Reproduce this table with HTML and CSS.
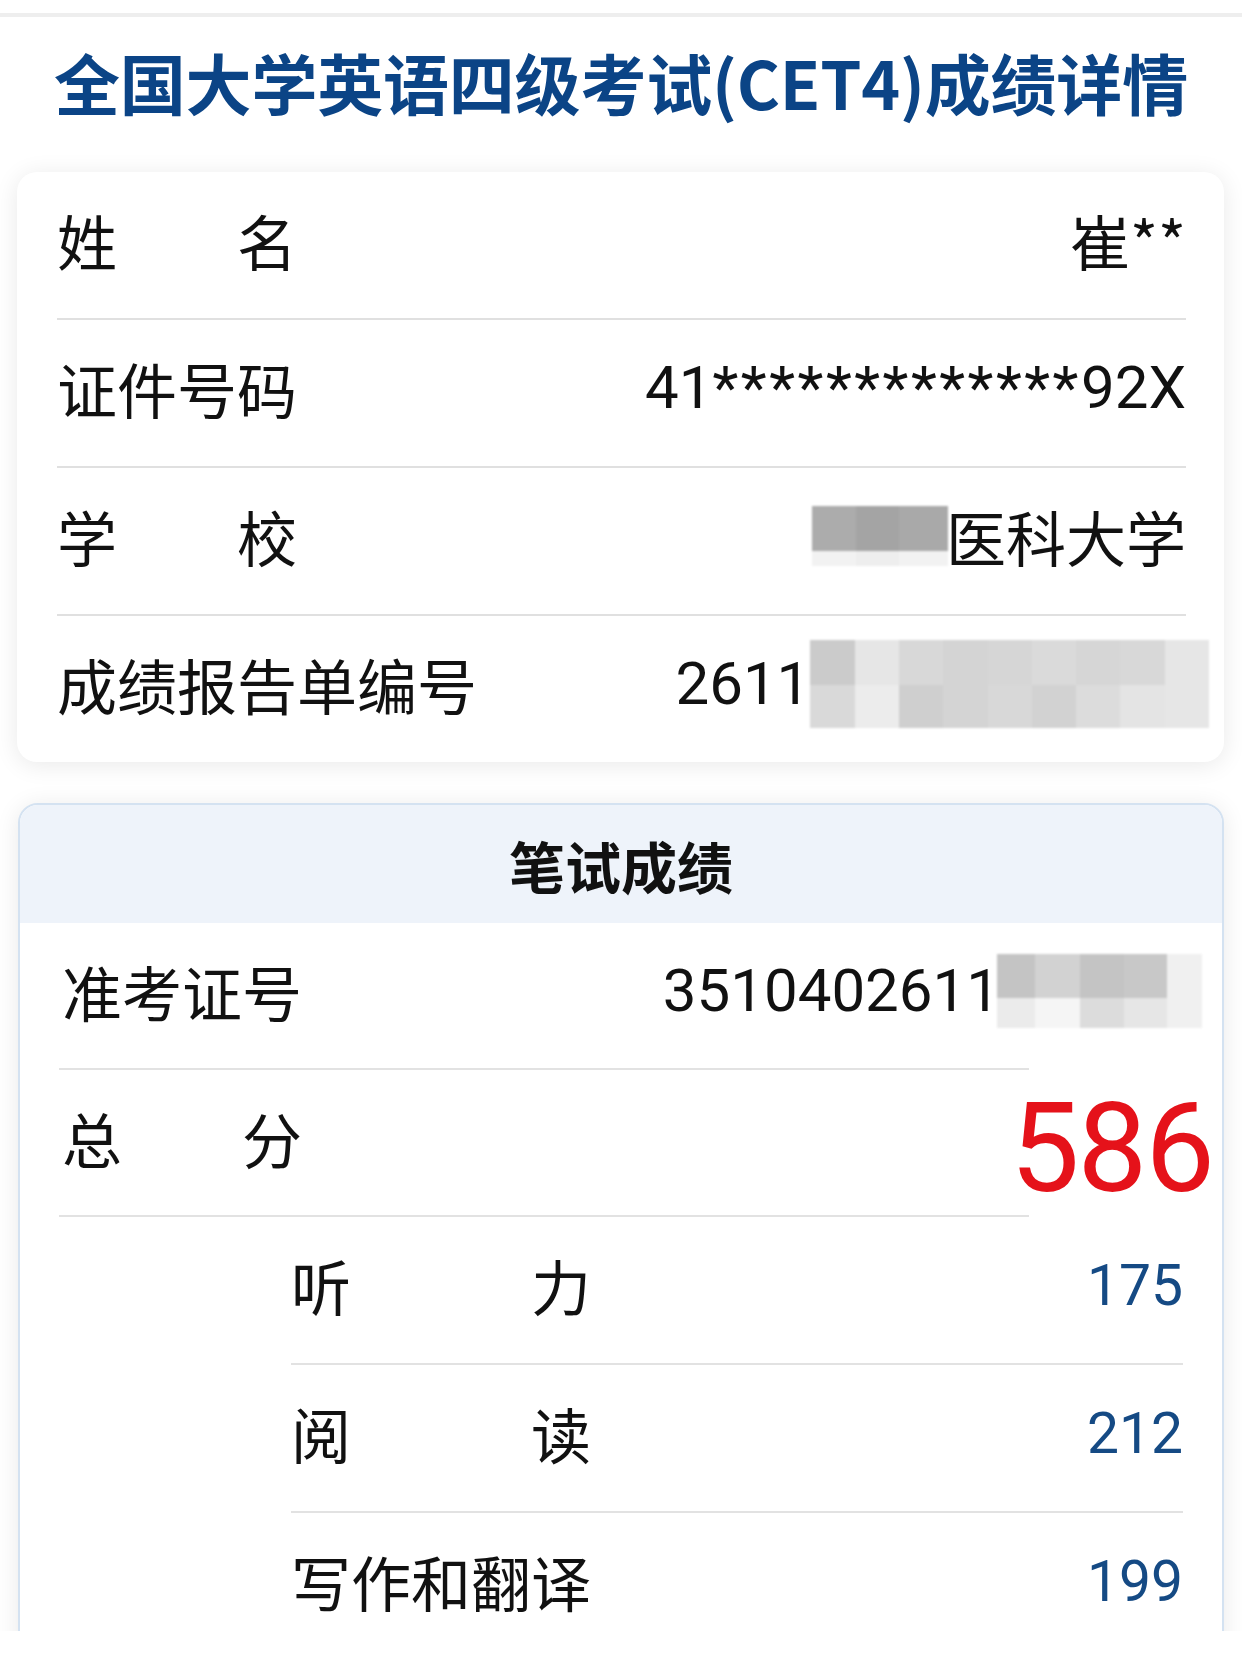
FILE: index.html
```html
<!DOCTYPE html>
<html lang="zh-CN">
<head>
<meta charset="utf-8">
<title>CET4 成绩详情</title>
<link rel="stylesheet" href="styles.css">
</head>
<body>
<div class="screen">
  <div class="topline"></div>
  <h1 class="title">全国大学英语四级考试(CET4)成绩详情</h1>

  <section class="card info">
    <div class="row">
      <span class="label">姓　　名</span>
      <span class="value">崔**</span>
    </div>
    <div class="row">
      <span class="label">证件号码</span>
      <span class="value num">41<span class="stars">*************</span>92X</span>
    </div>
    <div class="row">
      <span class="label">学　　校</span>
      <span class="value with-mosaic">
        <span class="mosaic m-school">
          <i class="g-ac"></i><i class="g-a4"></i><i class="g-a9"></i>
          <i class="g-f2"></i><i class="g-ee"></i><i class="g-f2"></i>
        </span>医科大学</span>
    </div>
    <div class="row">
      <span class="label">成绩报告单编号</span>
      <span class="value num with-mosaic report">2611<span class="mosaic m-report">
          <i class="g-cb"></i><i class="g-e6"></i><i class="g-d8"></i><i class="g-d4"></i><i class="g-d6"></i><i class="g-da"></i><i class="g-d6"></i><i class="g-d8"></i><i class="g-e6"></i>
          <i class="g-d9"></i><i class="g-ec"></i><i class="g-cf"></i><i class="g-d4"></i><i class="g-d8"></i><i class="g-d2"></i><i class="g-dc"></i><i class="g-e4"></i><i class="g-e6"></i>
        </span></span>
    </div>
  </section>

  <section class="card written">
    <div class="card-head">笔试成绩</div>
    <div class="card-body">
      <div class="main-row">
        <span class="label">准考证号</span>
        <span class="value num with-mosaic ticket">3510402611<span class="mosaic m-ticket">
            <i class="g-c4"></i><i class="g-d2"></i><i class="g-c4"></i><i class="g-c8"></i><i class="g-f0"></i>
            <i class="g-eb"></i><i class="g-f5"></i><i class="g-dc"></i><i class="g-e6"></i><i class="g-f0"></i>
          </span></span>
      </div>
      <div class="main-row">
        <span class="label">总　　分</span>
        <span class="value total">586</span>
      </div>
      <div class="sub-row">
        <span class="label">听　　　力</span>
        <span class="value score">175</span>
      </div>
      <div class="sub-row">
        <span class="label">阅　　　读</span>
        <span class="value score">212</span>
      </div>
      <div class="sub-row">
        <span class="label">写作和翻译</span>
        <span class="value score">199</span>
      </div>
    </div>
  </section>
</div>
</body>
</html>
```

FILE: styles.css
```css
html, body {
  margin: 0;
  padding: 0;
  background: #ffffff;
}

body {
  font-family: "Noto Sans CJK SC", "Noto Sans", sans-serif;
  color: #111111;
}

.screen {
  height: 1631px;
  overflow: hidden;
  background: #ffffff;
}

.topline {
  margin-top: 13px;
  height: 4px;
  background: #eeeeee;
}

.title {
  margin: 0 0 51px;
  padding-top: 24px;
  font-size: 66px;
  line-height: 80px;
  font-weight: 700;
  text-align: center;
  color: #0b4486;
  white-space: nowrap;
  letter-spacing: -0.2px;
}

.card {
  background: #ffffff;
  border-radius: 20px;
  box-shadow: 0 3px 24px rgba(0, 0, 0, 0.09);
}

.info {
  margin: 0 18px 0 17px;
  padding: 0 38px 0 40px;
}

.row {
  display: flex;
  align-items: center;
  height: 136px;
  padding-bottom: 10px;
  border-bottom: 2px solid #e0e0e0;
}

.row:last-child {
  border-bottom: none;
}

.label {
  font-size: 60px;
  line-height: 1;
  color: #111111;
  white-space: pre;
}

.value {
  margin-left: auto;
  font-size: 60px;
  line-height: 1;
  color: #111111;
  white-space: nowrap;
}

.num {
  font-family: "Roboto", "Noto Sans", sans-serif;
}

.stars {
  letter-spacing: 2.5px;
}

.with-mosaic {
  display: inline-flex;
  align-items: center;
}

.mosaic {
  display: grid;
  filter: blur(0.8px);
}

.mosaic i {
  display: block;
}

.m-school {
  grid-template-columns: 44px 43px 49px;
  grid-template-rows: 45px 15px;
  margin-right: -2px;
}

.m-report {
  grid-template-columns: repeat(9, 44.3px);
  grid-template-rows: 45px 43px;
}

.report {
  margin-right: -23px;
}

.m-ticket {
  grid-template-columns: 38px 45px 44px 43px 35px;
  grid-template-rows: 44px 30px;
  margin-left: -3px;
}

.ticket {
  margin-right: -19px;
}

.g-a4 { background: #a4a4a4; }
.g-a9 { background: #a9a9a9; }
.g-ac { background: #acacac; }
.g-c4 { background: #c4c4c4; }
.g-c8 { background: #c8c8c8; }
.g-cb { background: #cbcbcb; }
.g-cf { background: #cfcfcf; }
.g-d2 { background: #d2d2d2; }
.g-d4 { background: #d4d4d4; }
.g-d6 { background: #d6d6d6; }
.g-d8 { background: #d8d8d8; }
.g-d9 { background: #d9d9d9; }
.g-da { background: #dadada; }
.g-dc { background: #dcdcdc; }
.g-e4 { background: #e4e4e4; }
.g-e6 { background: #e6e6e6; }
.g-eb { background: #ebebeb; }
.g-ec { background: #ececec; }
.g-ee { background: #eeeeee; }
.g-f0 { background: #f0f0f0; }
.g-f2 { background: #f2f2f2; }
.g-f5 { background: #f5f5f5; }

.written {
  margin: 41px 18px 0 18px;
  border: 2px solid #d4e2f1;
  overflow: hidden;
}

.card-head {
  height: 118px;
  background: #eef3fa;
  display: flex;
  align-items: center;
  justify-content: center;
  font-size: 56px;
  font-weight: 700;
  color: #111111;
}

.card-body {
  padding: 0 39px 0 39px;
}

.main-row {
  position: relative;
  display: flex;
  align-items: center;
  height: 135px;
  padding-bottom: 12px;
}

.main-row::after {
  content: "";
  position: absolute;
  left: 0;
  bottom: 0;
  width: 970px;
  height: 2px;
  background: #e2e2e2;
}

.main-row .label {
  padding-left: 3px;
}

.total {
  font-family: "Roboto", "Noto Sans", sans-serif;
  font-size: 124px;
  letter-spacing: -2px;
  color: #e5121a;
  margin-right: -30px;
  padding-top: 22px;
}

.sub-row {
  display: flex;
  align-items: center;
  height: 136px;
  padding-bottom: 10px;
  margin-left: 232px;
  border-bottom: 2px solid #e2e2e2;
}

.score {
  font-family: "Roboto", "Noto Sans", sans-serif;
  font-size: 57px;
  color: #154a84;
}
```
